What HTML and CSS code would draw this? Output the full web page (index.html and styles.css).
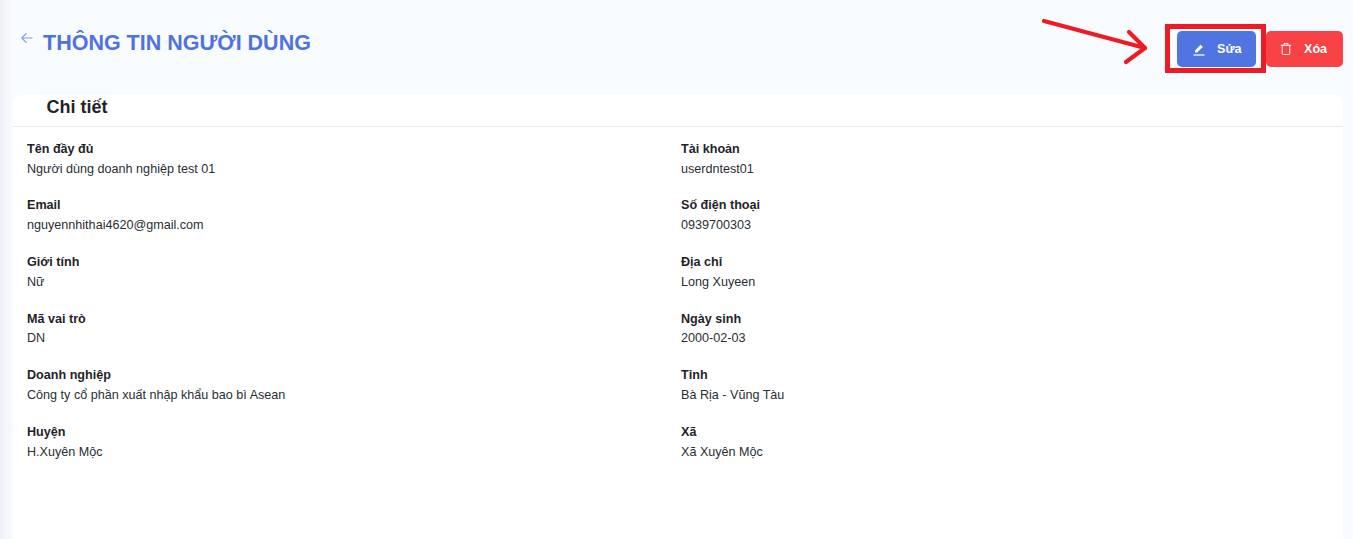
FILE: index.html
```html
<!DOCTYPE html>
<html lang="vi">
<head>
<meta charset="utf-8">
<title>Thông tin người dùng</title>
<link rel="stylesheet" href="styles.css">
</head>
<body>
<div class="page">
  <header class="top">
    <div class="title-wrap">
      <svg class="back" width="14" height="14" viewBox="0 0 14 14"><path d="M12.5 7H1.8M6.5 2.2 1.8 7l4.7 4.8" fill="none" stroke="#7f97ea" stroke-width="1.1"/></svg>
      <h1 class="title">THÔNG TIN NGƯỜI DÙNG</h1>
    </div>
    <div class="actions">
      <button class="btn btn-edit">
        <svg width="14" height="14" viewBox="0 0 14 14"><path d="M1.5 13h11" stroke="#fff" stroke-width="1.3"/><path d="M3 10.6V8.4L8.6 2.8l2.2 2.2-5.6 5.6z" fill="#fff"/></svg>
        <span>Sửa</span>
      </button>
      <button class="btn btn-del">
        <svg width="14" height="14" viewBox="0 0 14 14"><path d="M1.8 3.3h10.4M5 3.2V1.6h4v1.6M3.2 3.3v8a1.2 1.2 0 0 0 1.2 1.2h5.2a1.2 1.2 0 0 0 1.2-1.2v-8" fill="none" stroke="#fff" stroke-width="1"/></svg>
        <span>Xóa</span>
      </button>
    </div>
  </header>
  <main class="card">
    <h2 class="card-head">Chi tiết</h2>
    <div class="grid">
      <div class="field"><div class="label">Tên đầy đủ</div><div class="value">Người dùng doanh nghiệp test 01</div></div>
      <div class="field"><div class="label">Tài khoản</div><div class="value">userdntest01</div></div>
      <div class="field"><div class="label">Email</div><div class="value">nguyennhithai4620@gmail.com</div></div>
      <div class="field"><div class="label">Số điện thoại</div><div class="value">0939700303</div></div>
      <div class="field"><div class="label">Giới tính</div><div class="value">Nữ</div></div>
      <div class="field"><div class="label">Địa chỉ</div><div class="value">Long Xuyeen</div></div>
      <div class="field"><div class="label">Mã vai trò</div><div class="value">DN</div></div>
      <div class="field"><div class="label">Ngày sinh</div><div class="value">2000-02-03</div></div>
      <div class="field"><div class="label">Doanh nghiệp</div><div class="value">Công ty cổ phần xuất nhập khẩu bao bì Asean</div></div>
      <div class="field"><div class="label">Tỉnh</div><div class="value">Bà Rịa - Vũng Tàu</div></div>
      <div class="field"><div class="label">Huyện</div><div class="value">H.Xuyên Mộc</div></div>
      <div class="field"><div class="label">Xã</div><div class="value">Xã Xuyên Mộc</div></div>
    </div>
  </main>
  <svg class="mark" width="120" height="70" viewBox="0 0 120 70"><path d="M14 21 115 48" fill="none" stroke="#ed1c24" stroke-width="4.2" stroke-linecap="round"/><path d="M99 32 115 48 96 62" fill="none" stroke="#ed1c24" stroke-width="4.2" stroke-linecap="round" stroke-linejoin="round"/></svg>
  <div class="highlight"></div>
</div>
</body>
</html>
```
FILE: styles.css
```css
* { box-sizing: border-box; }
html, body { margin: 0; height: 100%; }
body {
  background: #f8fbff;
  font-family: "Liberation Sans", Arial, sans-serif;
  color: #1f2329;
  overflow: hidden;
}
.page {
  position: relative;
  height: 539px;
  padding-left: 13px;
  padding-right: 10px;
  display: flex;
  flex-direction: column;
  background: linear-gradient(to right, #eef0f4 0, #f8fbff 13px);
}
.top {
  height: 95px;
  flex: none;
  display: flex;
  justify-content: space-between;
  align-items: flex-start;
}
.title-wrap {
  display: flex;
  align-items: flex-start;
  padding: 31px 0 0 7px;
}
.back { margin-right: 9px; }
.title {
  margin: 0;
  font-size: 21.5px;
  line-height: 25px;
  font-weight: 700;
  color: #4f72e0;
}
.actions {
  display: flex;
  gap: 10px;
  padding-top: 31px;
}
.btn {
  width: 79px;
  height: 36px;
  border: 0;
  border-radius: 5px;
  display: flex;
  align-items: center;
  justify-content: flex-start;
  padding: 0 0 0 15px;
  gap: 11px;
  color: #fff;
  font: 700 12.6px "Liberation Sans", Arial, sans-serif;
}
.btn-edit { background: #5075e0; }
.btn-del { width: 77px; padding-left: 13px; background: #f84245; }
.card {
  flex: 1;
  background: #fff;
  border-radius: 8px 8px 0 0;
}
.card-head {
  margin: 0;
  height: 32px;
  padding: 2px 0 0 33.5px;
  font-size: 18px;
  line-height: 20px;
  font-weight: 700;
  color: #1f2329;
  border-bottom: 1px solid #e9ebee;
}
.grid {
  display: grid;
  grid-template-columns: 654px 1fr;
  padding: 13.8px 14px 0;
  grid-auto-rows: 56.6px;
}
.label {
  font-size: 12.6px;
  line-height: 16px;
  font-weight: 700;
  color: #1f2329;
}
.value {
  margin-top: 3.8px;
  font-size: 12.6px;
  line-height: 16px;
  color: #2a2e34;
}
.mark {
  position: absolute;
  left: 1030px;
  top: 0;
}
.highlight {
  position: absolute;
  left: 1165px;
  top: 24px;
  width: 101px;
  height: 49px;
  border: 5px solid #ed1c24;
}
```
